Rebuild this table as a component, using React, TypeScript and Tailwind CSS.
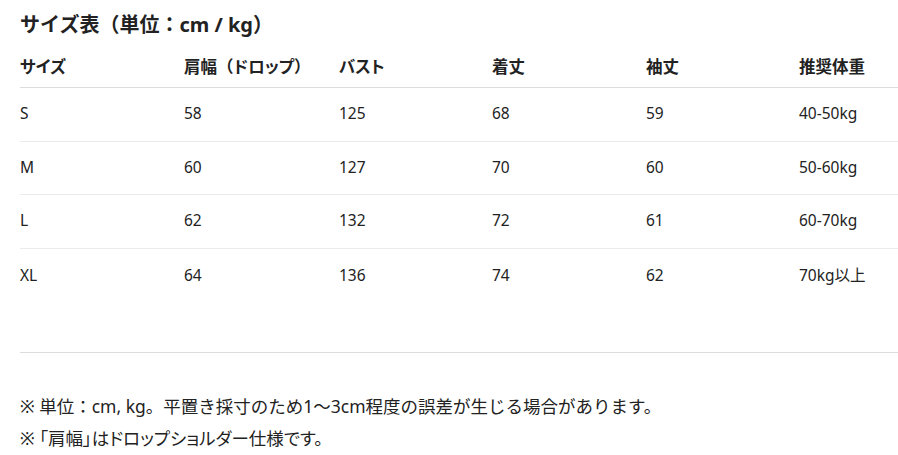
import type { ReactNode } from 'react'

const rows = [
  ['S', '58', '125', '68', '59', '40-50kg'],
  ['M', '60', '127', '70', '60', '50-60kg'],
  ['L', '62', '132', '72', '61', '60-70kg'],
  ['XL', '64', '136', '74', '62', '70kg以上'],
]

// カナだけ詰める
function Kana({ children }: { children: ReactNode }) {
  return <span className="[font-feature-settings:'palt']">{children}</span>
}

const heads: ReactNode[] = [
  <Kana>サイズ</Kana>,
  <>肩幅（<Kana>ドロップ</Kana>）</>,
  <Kana>バスト</Kana>,
  '着丈',
  '袖丈',
  '推奨体重',
]
const widths = ['w-[164px]', 'w-[155px]', 'w-[153px]', 'w-[154px]', 'w-[153px]', 'w-auto']

export default function App() {
  return (
    <div
      className="min-h-screen bg-white text-[#222] pl-5 pt-[11px]"
      style={{ fontFamily: '"Noto Sans", "Noto Sans CJK JP", sans-serif' }}
    >
      <h2 className="text-[20px] leading-7 font-bold">サイズ表（単位：cm / kg）</h2>

      <table className="mt-[10px] w-full table-fixed border-collapse text-[15.5px]">
        <colgroup>
          {widths.map((w, i) => (
            <col key={i} className={w} />
          ))}
        </colgroup>
        <thead>
          <tr className="border-b border-[#dcdcdc]">
            {heads.map((h, i) => (
              <th key={i} className="h-[38px] p-0 text-left align-middle font-bold text-[16.5px]">
                {h}
              </th>
            ))}
          </tr>
        </thead>
        <tbody>
          {rows.map((r, i) => (
            <tr key={r[0]} className={i < rows.length - 1 ? 'border-b border-[#ececec]' : ''}>
              {r.map((c, j) => (
                <td key={j} className={`${i === 1 ? 'h-[53px]' : 'h-[54px]'} p-0 align-middle`}>
                  {c}
                </td>
              ))}
            </tr>
          ))}
        </tbody>
      </table>

      <div className="mt-[50px] border-t border-[#dcdcdc]" />

      {/* 注記 */}
      <div className="mt-[37px] text-[17.5px] leading-8">
        <p>※ 単位：cm, kg。平置き採寸のため1～3cm程度の誤差が生じる場合があります。</p>
        <p className="[font-feature-settings:'palt']">※ 「肩幅」はドロップショルダー仕様です。</p>
      </div>
    </div>
  )
}
